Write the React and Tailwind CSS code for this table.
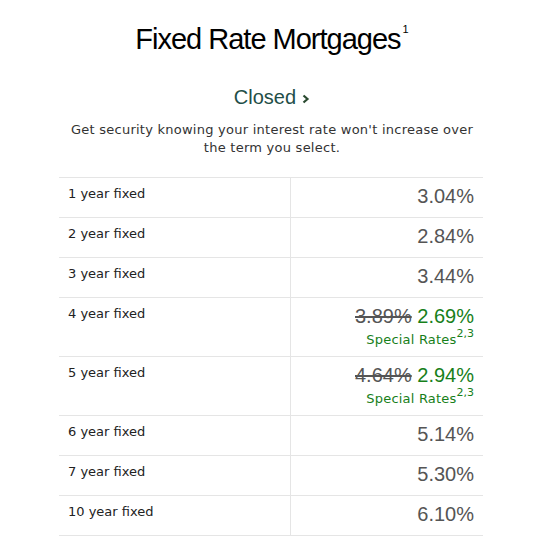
const rows = [
  { term: "1 year fixed", rate: "3.04%" },
  { term: "2 year fixed", rate: "2.84%" },
  { term: "3 year fixed", rate: "3.44%" },
  { term: "4 year fixed", was: "3.89%", rate: "2.69%" },
  { term: "5 year fixed", was: "4.64%", rate: "2.94%" },
  { term: "6 year fixed", rate: "5.14%" },
  { term: "7 year fixed", rate: "5.30%" },
  { term: "10 year fixed", rate: "6.10%" },
];

function RateRow({ term, rate, was }) {
  return (
    <div className="flex border-b border-[#e5e5e5]">
      <div className="w-[232px] border-r border-[#e5e5e5] pl-[9px] pt-[7px] pb-[14px] text-[13px] leading-[18px] text-[#222]">
        {term}
      </div>
      <div className="flex-1 pr-[9px] pt-[7px] pb-[7px] text-right">
        <div className="font-['Liberation_Sans',Arial,sans-serif] text-[20px] leading-[23px]">
          {was && <span className="text-[#555] line-through">{was}</span>}
          {was && " "}
          <span className={was ? "text-[#17801a]" : "text-[#555]"}>{rate}</span>
        </div>
        {was && (
          <div className="mt-[3px] h-[18px] text-[13px] leading-[18px] tracking-[0.2px] text-[#17801a]">
            Special Rates
            <span className="relative -top-[7px] text-[11px] leading-none tracking-normal">2,3</span>
          </div>
        )}
      </div>
    </div>
  );
}

export default function App() {
  return (
    <div className="min-h-[557px] w-[544px] bg-white font-['DejaVu_Sans',Verdana,sans-serif]">
      <div className="flex justify-center pt-[21px]">
        <h1 className="font-['Liberation_Sans',Arial,sans-serif] text-[29px] leading-[36px] tracking-[-1px] text-black">
          Fixed Rate Mortgages
          <sup className="relative -top-[16px] ml-[2px] text-[11px] tracking-normal">1</sup>
        </h1>
      </div>

      <div className="mt-[28px] flex items-center justify-center gap-[6px]">
        <span className="font-['Liberation_Sans',Arial,sans-serif] text-[20px] leading-[24px] text-[#1f4f48]">
          Closed
        </span>
        <svg width="8" height="10" viewBox="0 0 8 10" className="mt-[3px]">
          <path d="M1.5 1.5 L5.5 5 L1.5 8.5" fill="none" stroke="#2a4a30" strokeWidth="2.2" />
        </svg>
      </div>

      <p className="mx-auto mt-[12px] w-[420px] text-center text-[13px] leading-[18px] tracking-[0.25px] text-[#333]">
        Get security knowing your interest rate won't increase over the term you select.
      </p>

      <div className="ml-[59px] mt-[20px] w-[424px] border-t border-[#e5e5e5]">
        {rows.map((r) => (
          <RateRow key={r.term} {...r} />
        ))}
      </div>
    </div>
  );
}
